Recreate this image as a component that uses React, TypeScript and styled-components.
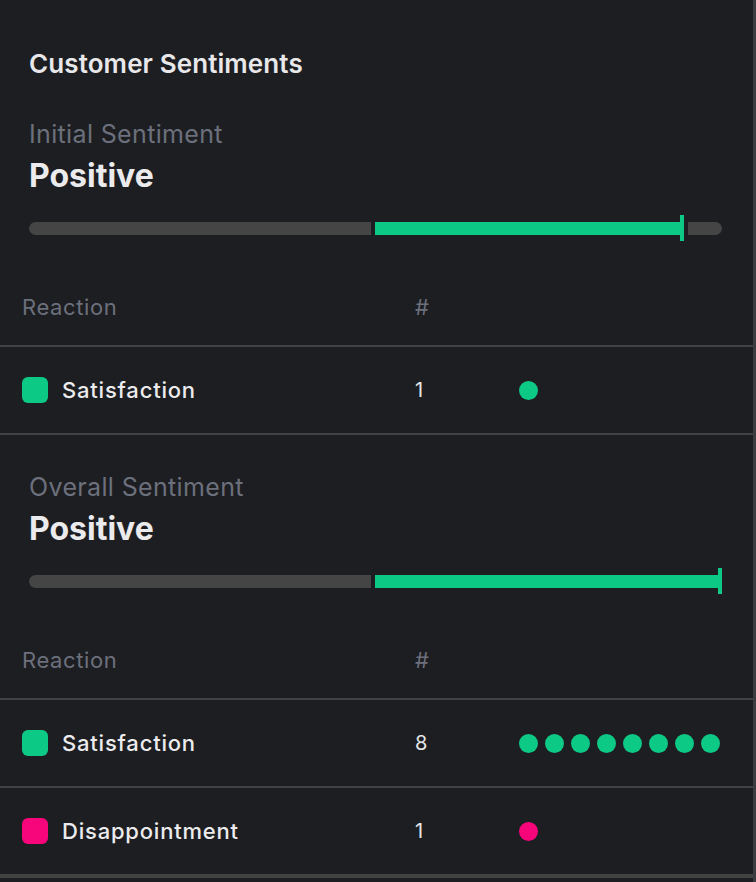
import styled, { createGlobalStyle } from "styled-components";

const GlobalStyle = createGlobalStyle`
  body {
    margin: 0;
    background: #1d1e22;
    font-family: Inter, "Noto Sans", sans-serif;
  }
`;

const GREEN = "#0dc986";
const PINK = "#f7057a";

const Panel = styled.div`
  width: 756px;
  min-height: 882px;
  box-sizing: border-box;
  background: #1d1e22;
  border-right: 3px solid #3b3c3f;
  padding-top: 49px;
`;

const Title = styled.h2`
  margin: 0 0 0 29px;
  font-size: 26px;
  letter-spacing: 0.1px;
  line-height: 30px;
  font-weight: 600;
  color: #e8e8ea;
`;

const SentimentBlock = styled.div<{ $first?: boolean }>`
  padding: 0 31px 0 29px;
  margin-top: ${(p) => (p.$first ? "40px" : "37px")};
`;

const Label = styled.div`
  font-size: 25px;
  letter-spacing: 0.35px;
  line-height: 30px;
  color: #6c707c;
`;

const Value = styled.div`
  margin-top: 9px;
  font-size: 32px;
  line-height: 36px;
  font-weight: 700;
  color: #ebebed;
`;

const Track = styled.div`
  margin-top: 21px;
  height: 26px;
  display: flex;
  align-items: center;
  gap: 4px;
`;

const TrackLeft = styled.div`
  flex: 0 0 342px;
  height: 13px;
  background: #454545;
  border-radius: 7px 0 0 7px;
`;

const TrackRight = styled.div`
  flex: 1;
  height: 26px;
  display: flex;
  align-items: center;
`;

const Fill = styled.div`
  height: 13px;
  background: ${GREEN};
`;

const Tick = styled.div`
  width: 4px;
  height: 26px;
  background: ${GREEN};
`;

const Rest = styled.div`
  flex: 1;
  height: 13px;
  margin-left: 4px;
  background: #454545;
  border-radius: 0 7px 7px 0;
`;

const Grid = styled.div`
  display: grid;
  grid-template-columns: 393px 104px 1fr;
  align-items: center;
  padding-left: 22px;
`;

const HeaderRow = styled(Grid)`
  padding-top: 52px;
  padding-bottom: 24px;
  border-bottom: 2px solid #404144;
  font-size: 22px;
  letter-spacing: 0.6px;
  line-height: 28px;
  color: #6c707c;
`;

const Row = styled(Grid)<{ $last?: boolean }>`
  height: 86px;
  border-bottom: ${(p) => (p.$last ? "4px solid #424242" : "2px solid #404144")};
`;

const Name = styled.div`
  display: flex;
  align-items: center;
  gap: 14px;
  font-size: 22px;
  letter-spacing: 0.8px;
  font-weight: 500;
  color: #ececee;
`;

const Swatch = styled.span<{ $color: string }>`
  width: 26px;
  height: 26px;
  border-radius: 6px;
  background: ${(p) => p.$color};
`;

const Count = styled.div`
  font-size: 20px;
  color: #e6e6e8;
`;

const Dots = styled.div`
  display: flex;
  gap: 7px;
`;

const Dot = styled.span<{ $color: string }>`
  width: 19px;
  height: 19px;
  border-radius: 50%;
  background: ${(p) => p.$color};
`;

type Reaction = { name: string; count: number; color: string };

const SentimentBar = ({ value }: { value: number }) => (
  <Track>
    <TrackLeft />
    <TrackRight>
      <Fill style={{ width: `calc((100% - ${value < 1 ? 8 : 4}px) * ${value})` }} />
      <Tick />
      {value < 1 && <Rest />}
    </TrackRight>
  </Track>
);

const Section = ({
  label,
  value,
  level,
  reactions,
  first,
}: {
  label: string;
  value: string;
  level: number;
  reactions: Reaction[];
  first?: boolean;
}) => (
  <>
    <SentimentBlock $first={first}>
      <Label>{label}</Label>
      <Value>{value}</Value>
      <SentimentBar value={level} />
    </SentimentBlock>
    <HeaderRow>
      <div>Reaction</div>
      <div>#</div>
      <div />
    </HeaderRow>
    {reactions.map((r, i) => (
      <Row key={r.name} $last={!first && i === reactions.length - 1}>
        <Name>
          <Swatch $color={r.color} />
          {r.name}
        </Name>
        <Count>{r.count}</Count>
        <Dots>
          {Array.from({ length: r.count }).map((_, j) => (
            <Dot key={j} $color={r.color} />
          ))}
        </Dots>
      </Row>
    ))}
  </>
);

const App = () => {
  return (
    <>
      <GlobalStyle />
      <Panel>
        <Title>Customer Sentiments</Title>
        <Section
          first
          label="Initial Sentiment"
          value="Positive"
          level={0.9}
          reactions={[{ name: "Satisfaction", count: 1, color: GREEN }]}
        />
        <Section
          label="Overall Sentiment"
          value="Positive"
          level={1}
          reactions={[
            { name: "Satisfaction", count: 8, color: GREEN },
            { name: "Disappointment", count: 1, color: PINK },
          ]}
        />
      </Panel>
    </>
  );
};

export default App;
